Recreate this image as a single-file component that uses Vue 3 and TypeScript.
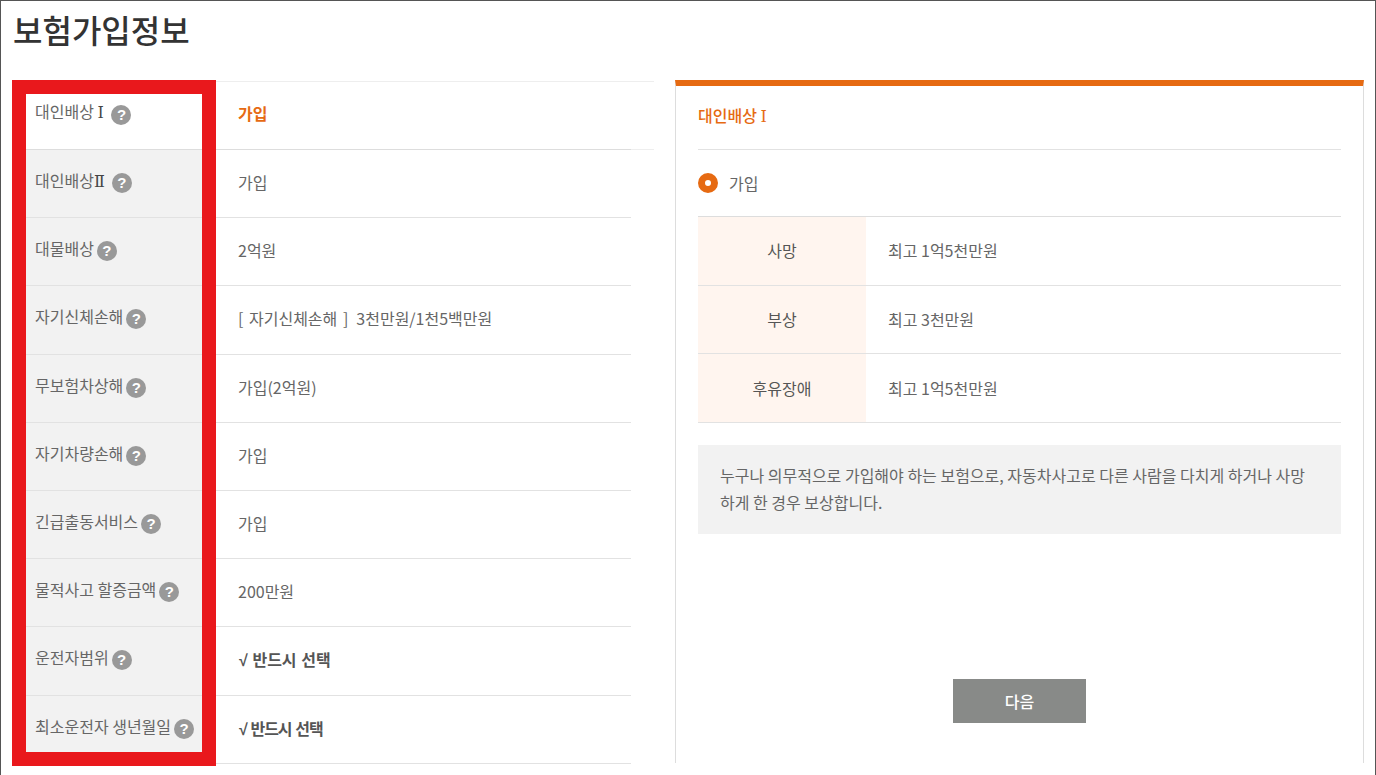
<script setup lang="ts">
interface Row { label: string; roman?: string; value?: string; kind?: string }
const rows: Row[] = [
  { label: '대인배상 ', roman: 'Ⅰ', value: '가입', kind: 'active' },
  { label: '대인배상', roman: 'Ⅱ', value: '가입' },
  { label: '대물배상', value: '2억원' },
  { label: '자기신체손해', kind: 'bracket' },
  { label: '무보험차상해', value: '가입(2억원)' },
  { label: '자기차량손해', value: '가입' },
  { label: '긴급출동서비스', value: '가입' },
  { label: '물적사고 할증금액', value: '200만원' },
  { label: '운전자범위', value: '반드시 선택', kind: 'must' },
  { label: '최소운전자 생년월일', value: '반드시 선택', kind: 'must tight' },
]
const cover = [
  { k: '사망', v: '최고 1억5천만원' },
  { k: '부상', v: '최고 3천만원' },
  { k: '후유장애', v: '최고 1억5천만원' },
]
</script>

<template>
  <div class="page">
    <h1 class="title">보험가입정보</h1>
    <div class="content">
      <section class="left">
        <div v-for="(r, i) in rows" :key="i" class="row" :class="{ first: i === 0 }">
          <div class="label">
            <span>{{ r.label }}<span v-if="r.roman" class="roman">{{ r.roman }}</span></span>
            <i class="help">?</i>
          </div>
          <div class="value" :class="r.kind">
            <template v-if="r.kind === 'bracket'"><span class="bracket-text">[ 자기신체손해 ]</span>3천만원/1천5백만원</template>
            <template v-else-if="r.kind && r.kind.startsWith('must')"><span class="check">√</span> {{ r.value }}</template>
            <template v-else>{{ r.value }}</template>
          </div>
        </div>
        <div class="highlight"></div>
      </section>
      <section class="panel">
        <h2 class="panel-title">대인배상 <span class="roman">Ⅰ</span></h2>
        <div class="radio-row">
          <i class="radio"></i>
          <span>가입</span>
        </div>
        <div class="cover">
          <div v-for="c in cover" :key="c.k" class="cover-row">
            <div class="cover-k">{{ c.k }}</div>
            <div class="cover-v">{{ c.v }}</div>
          </div>
        </div>
        <p class="note">누구나 의무적으로 가입해야 하는 보험으로, 자동차사고로 다른 사람을 다치게 하거나 사망하게 한 경우 보상합니다.</p>
        <button class="next" type="button">다음</button>
      </section>
    </div>
  </div>
</template>

<style>
html, body { margin: 0; background: #fff; overflow: hidden; }
</style>

<style scoped>
.page {
  box-sizing: border-box;
  width: 1376px;
  height: 775px;
  overflow: hidden;
  border: 1px solid #555;
  border-bottom: 0;
  padding: 0 11px;
  font-family: "Noto Sans CJK KR", "Noto Sans", sans-serif;
  color: #666;
  font-size: 16px;
  background: #fff;
}
.title {
  margin: 0;
  height: 79px;
  padding: 5px 0 0 1px;
  box-sizing: border-box;
  font-size: 32px;
  line-height: 46px;
  font-weight: 500;
  color: #333;
}
.content { display: flex; gap: 21px; align-items: flex-start; }
.left {
  position: relative;
  width: 642px;
  border-top: 1px solid #eee;
  margin-top: 1px;
}
.row {
  display: flex;
  width: 619px;
  height: 68.2px;
  box-sizing: border-box;
  border-bottom: 1px solid #e2e2e2;
}
.row.first {
  width: 642px;
  height: 68px;
  border-bottom: 0;
}
.row.first::after {
  content: "";
  flex: 1;
  border-bottom: 1px solid #eee;
}
.first .label, .first .value { border-bottom: 1px solid #ddd; }
.label {
  box-sizing: border-box;
  width: 190px;
  padding: 18px 0 0 23px;
  display: flex;
  align-items: flex-start;
  gap: 3px;
  background: #f2f2f2;
  line-height: 24px;
  white-space: nowrap;
  font-size: 16px;
}
.first .label { background: #fff; padding-top: 17px; }
.roman {
  display: inline-block;
  font-family: "DejaVu Serif", serif;
  font-size: 16px;
  font-weight: 400;
  color: #444;
}
.label .roman { width: 15px; }
.first .label .roman { width: 11px; }
.panel-title .roman { color: #e66a12; }
.help {
  flex: none;
  width: 20px;
  height: 20px;
  margin-top: 5px;
  border-radius: 50%;
  background: #999;
  color: #fff;
  font: 700 15px/20px "Liberation Sans", sans-serif;
  text-align: center;
}
.first .help { margin-top: 6px; }
.value {
  padding: 20px 0 0 36px;
  line-height: 24px;
  white-space: pre;
  flex: 1;
  box-sizing: border-box;
}
.first .value { flex: none; width: 429px; padding-top: 19px; }
.value.active { color: #e66a12; font-weight: 700; }
.value.must { font-weight: 700; color: #555; padding-left: 37px; word-spacing: 1px; }
.value.tight { letter-spacing: -1px; }
.check { font-family: "Liberation Sans", sans-serif; }
.bracket-text { word-spacing: 2px; margin-right: 8px; }
.highlight {
  position: absolute;
  left: 0;
  top: -2px;
  width: 204px;
  height: 686px;
  box-sizing: border-box;
  border: 14px solid #e9181c;
  pointer-events: none;
}
.panel {
  box-sizing: border-box;
  width: 689px;
  height: 683px;
  border: 1px solid #ddd;
  border-top: 6px solid #e66a12;
  border-bottom: 0;
  padding: 0 22px;
}
.panel-title {
  margin: 0;
  height: 64px;
  padding-top: 17px;
  box-sizing: border-box;
  border-bottom: 1px solid #e2e2e2;
  font-size: 16px;
  line-height: 24px;
  font-weight: 500;
  color: #e66a12;
}
.radio-row {
  height: 67px;
  box-sizing: border-box;
  border-bottom: 1px solid #ddd;
  display: flex;
  align-items: center;
  gap: 11px;
}
.radio {
  box-sizing: border-box;
  width: 20px;
  height: 20px;
  border-radius: 50%;
  border: 7px solid #e66a12;
  background: #fff;
}
.cover-row {
  display: flex;
  height: 68.6px;
  box-sizing: border-box;
  border-bottom: 1px solid #e2e2e2;
}
.cover-k {
  width: 168px;
  background: #fff5ef;
  display: flex;
  align-items: center;
  justify-content: center;
  color: #555;
}
.cover-v {
  display: flex;
  align-items: center;
  padding-left: 22px;
}
.cover-row:first-child > div { padding-bottom: 2px; }
.note {
  margin: 22px 0 0;
  height: 89px;
  box-sizing: border-box;
  padding: 17px 22px;
  background: #f2f2f2;
  line-height: 27px;
  word-break: break-all;
}
.next {
  display: block;
  margin: 145px auto 0;
  width: 133px;
  height: 44px;
  border: 0;
  background: #888a88;
  color: #fff;
  font: 500 16px "Noto Sans CJK KR", sans-serif;
}
</style>
